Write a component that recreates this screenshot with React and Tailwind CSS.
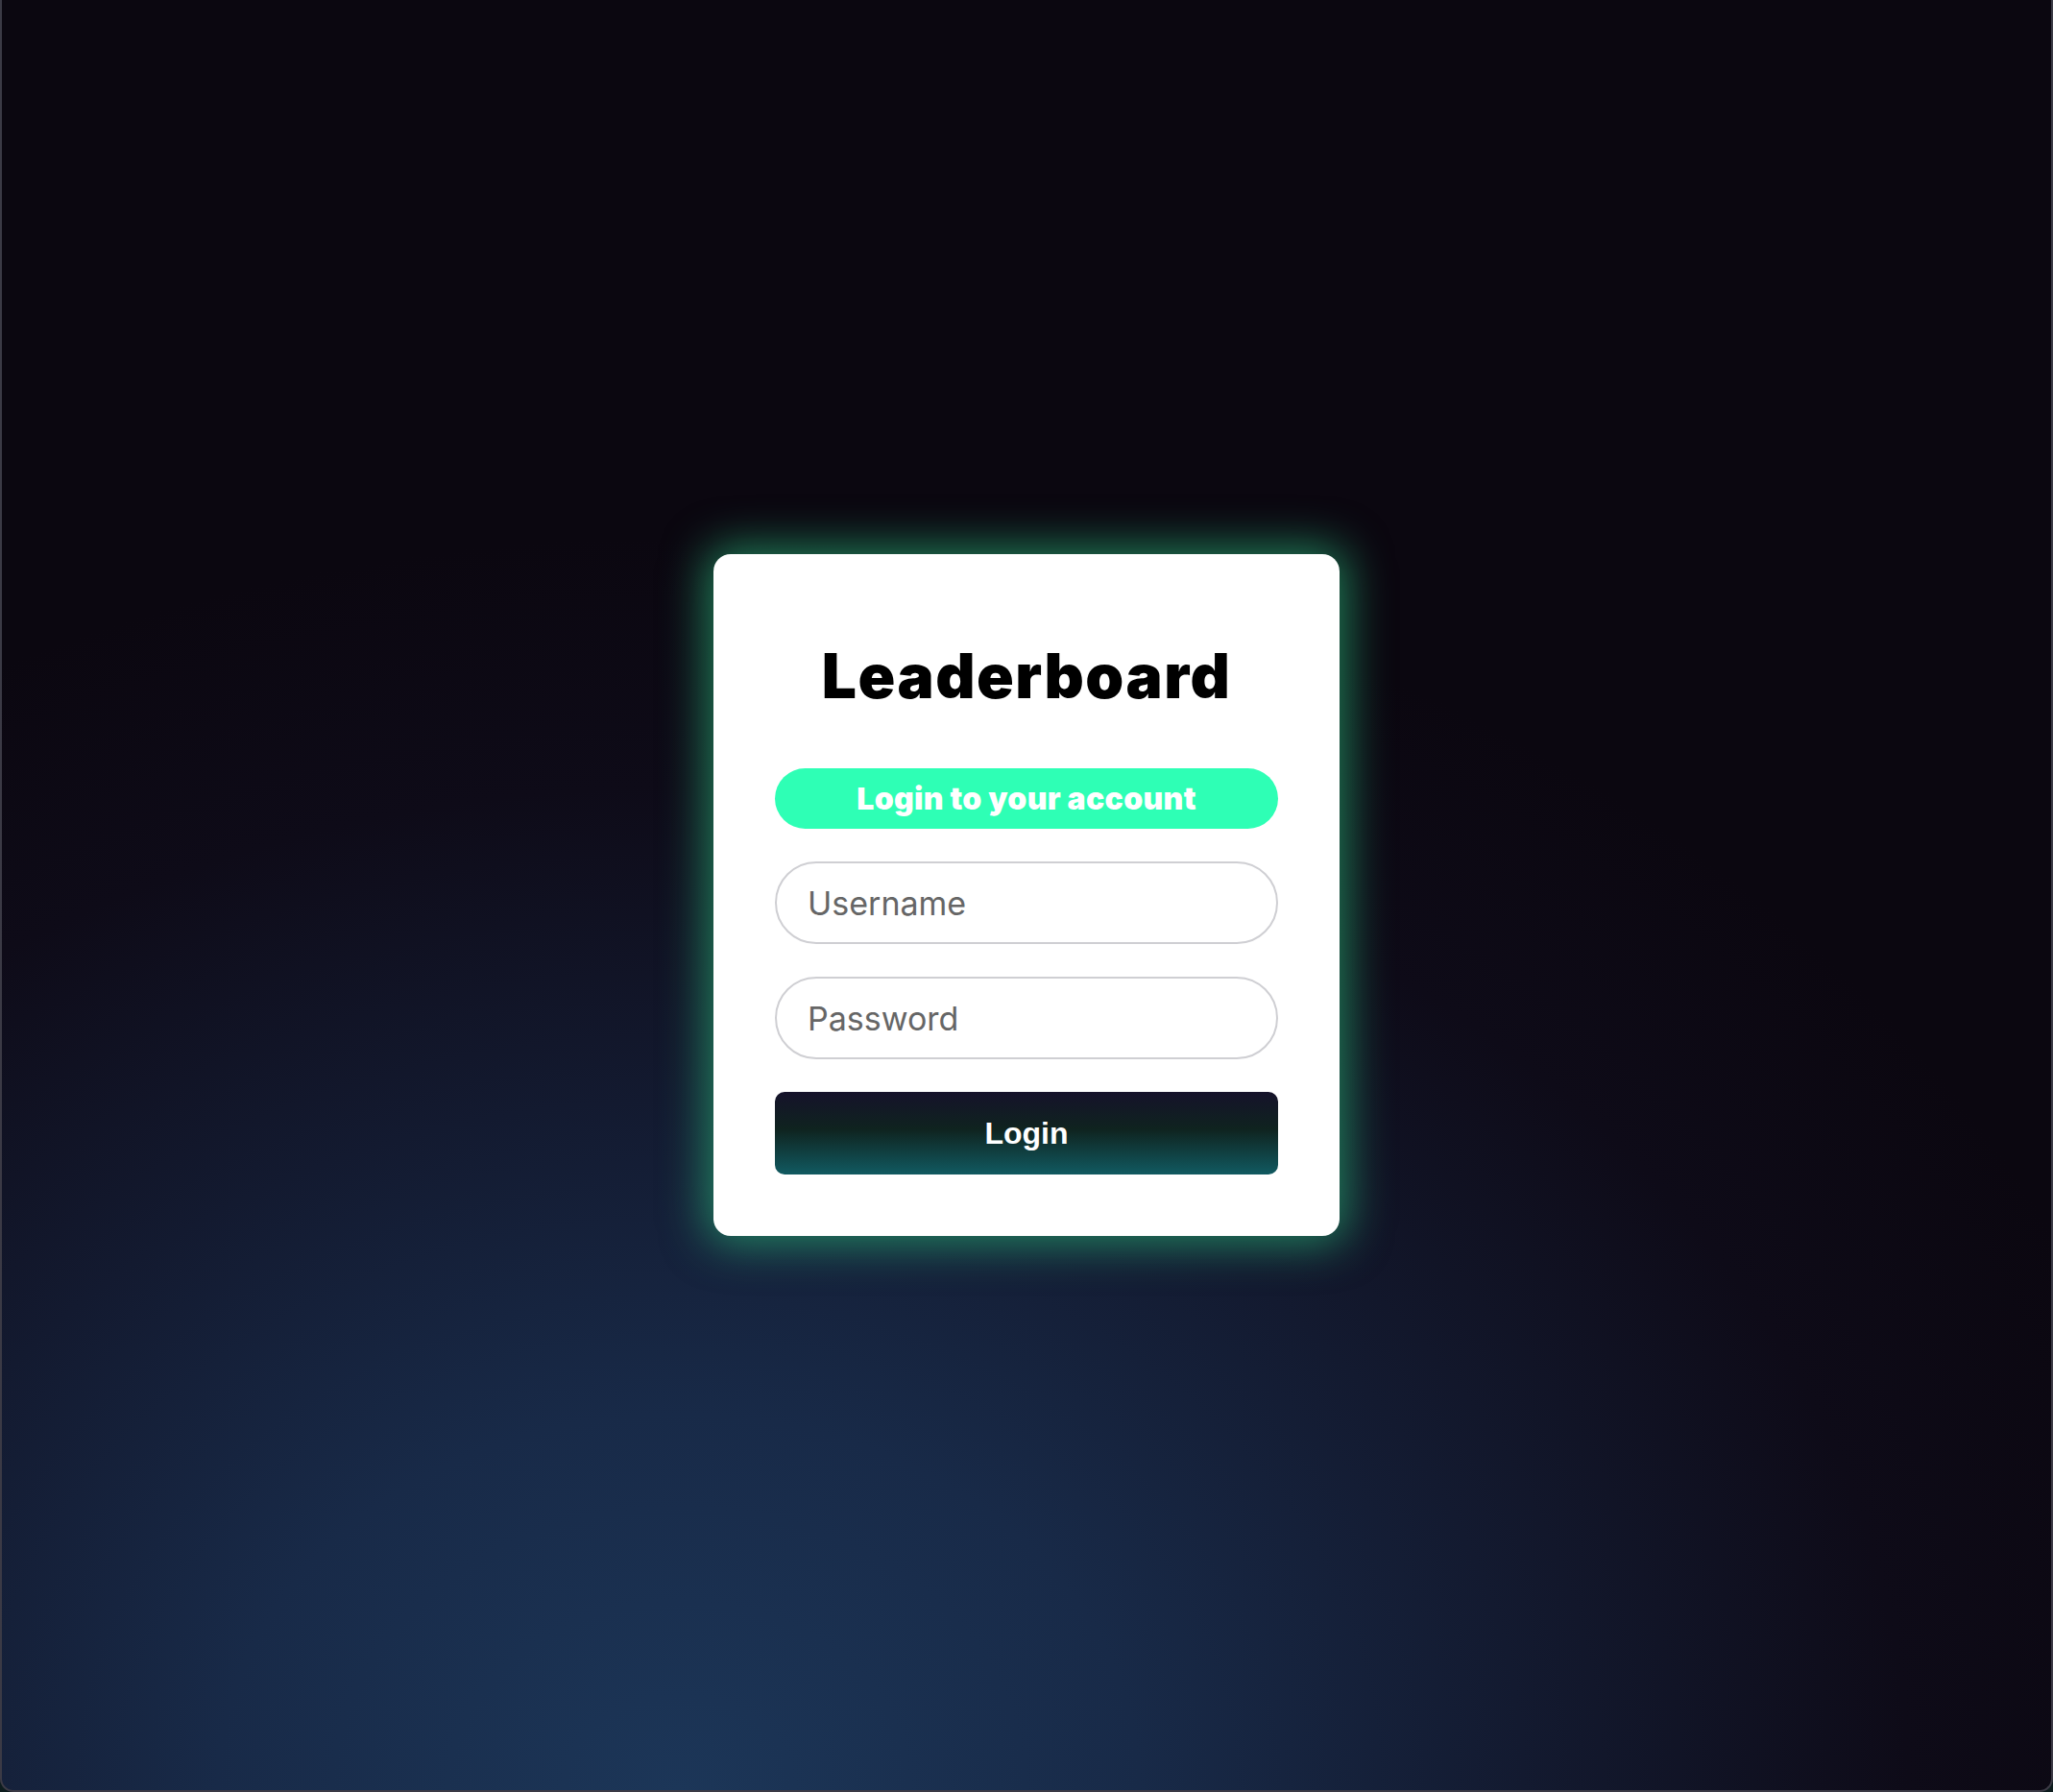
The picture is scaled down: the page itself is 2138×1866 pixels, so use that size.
import React, { useState } from 'react';

const LoginCard = () => {
  const [username, setUsername] = useState('');
  const [password, setPassword] = useState('');

  const handleSubmit = (event) => {
    event.preventDefault();
  };

  return (
    <form
      onSubmit={handleSubmit}
      className="w-[652px] bg-white rounded-[18px] p-16 flex flex-col gap-[34px] shadow-[0_0_46px_8px_rgba(40,170,115,0.72)]"
    >
      <div className="h-[125px] flex items-center justify-center">
        <h1 className="text-[64px] leading-none font-black text-black tracking-[1.5px] font-['Inter',sans-serif]">
          Leaderboard
        </h1>
      </div>

      <div className="h-[63px] rounded-full bg-[#2effb5] flex items-center justify-center">
        <span className="text-[32px] leading-none font-black text-white tracking-[0.3px] font-['Inter',sans-serif]">
          Login to your account
        </span>
      </div>

      <input
        type="text"
        placeholder="Username"
        value={username}
        onChange={(e) => setUsername(e.target.value)}
        className="h-[86px] w-full rounded-full border-2 border-[#cfcfd3] px-[32px] text-[34px] text-[#333] placeholder-[#666] outline-none font-['Inter',sans-serif]"
      />
      <input
        type="password"
        placeholder="Password"
        value={password}
        onChange={(e) => setPassword(e.target.value)}
        className="h-[86px] w-full rounded-full border-2 border-[#cfcfd3] px-[32px] text-[34px] text-[#333] placeholder-[#666] outline-none font-['Inter',sans-serif]"
      />

      <button
        type="submit"
        className="h-[86px] w-full rounded-[10px] bg-[linear-gradient(180deg,#15122a_0%,#0f231f_45%,#115a61_100%)] text-white text-[32px] font-bold font-['Liberation_Sans',Arial,sans-serif]"
      >
        Login
      </button>
    </form>
  );
};

const App = () => {
  return (
    <div className="w-full h-[1866px] bg-[#0d1c1e]">
      <div className="w-full h-full rounded-b-[14px] border-x-2 border-b-2 border-[#3b3a45] bg-[radial-gradient(ellipse_75%_70%_at_33%_100%,#1c3658_0%,#182a48_30%,#131a30_55%,#0e0b18_80%,#0b0710_100%)] flex items-center justify-center">
        <LoginCard />
      </div>
    </div>
  );
};

export default App;
